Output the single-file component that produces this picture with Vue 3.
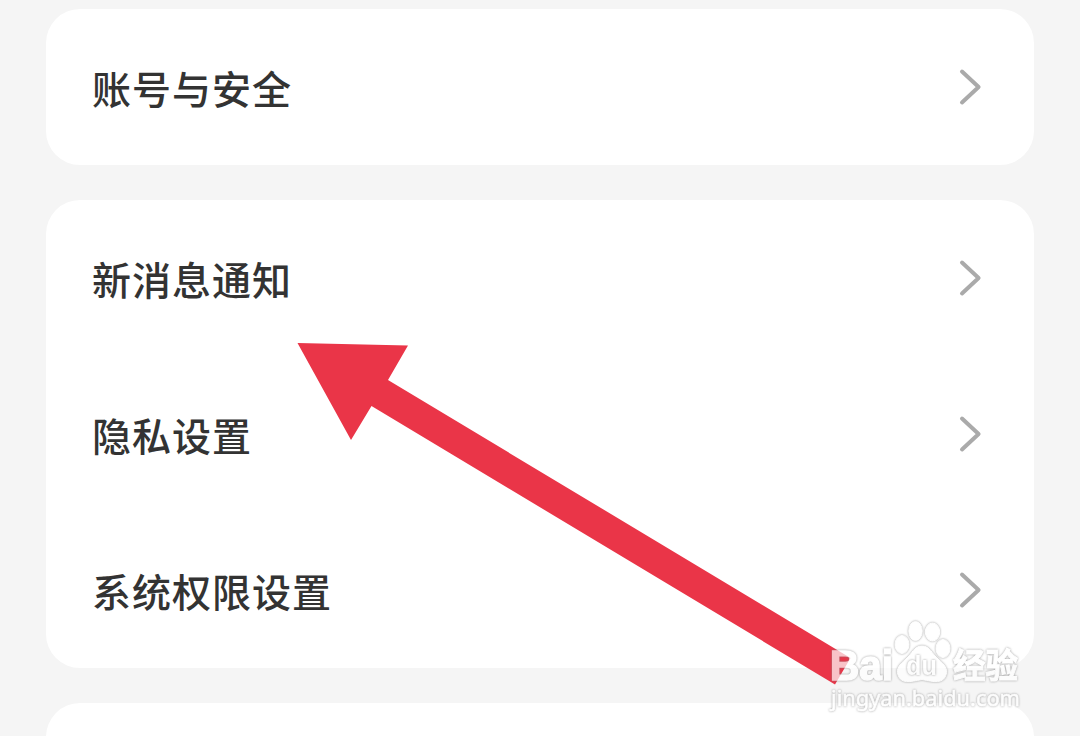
<template>
  <div class="settings">
    <section v-for="(group, i) in groups" :key="i" class="card">
      <div v-for="item in group" :key="item" class="row">
        <span class="label">{{ item }}</span>
        <svg class="chevron" viewBox="0 0 24 38" aria-hidden="true">
          <path d="M4 3.5 L20.6 19 L4 34.5" />
        </svg>
      </div>
    </section>

    <svg class="pointer" viewBox="0 0 1080 736" aria-hidden="true">
      <polygon points="297.5,343 408,345.5 388,380 850.5,658 835,684.5 371.5,406 351,440" />
    </svg>

    <svg class="watermark" viewBox="820 610 220 126">
      <g class="mark">
        <text class="brand" x="830" y="680" textLength="63" lengthAdjust="spacingAndGlyphs">Bai</text>
        <ellipse cx="902" cy="644.5" rx="7" ry="9" />
        <ellipse cx="915.5" cy="631" rx="6.7" ry="9.5" />
        <ellipse cx="932.5" cy="632" rx="7.2" ry="9" />
        <ellipse cx="943" cy="648.5" rx="7" ry="9" />
        <path d="M922 646 C930 646 932 654 938 659 C945 665 948 669 946 675 C943 684 934 682 922 679.5 C910 682 901 684 898 675 C896 669 899 665 906 659 C912 654 914 646 922 646 Z" />
        <text class="du" x="906" y="674.5" textLength="31" lengthAdjust="spacingAndGlyphs">du</text>
        <text class="cn" x="953" y="678" textLength="65" lengthAdjust="spacingAndGlyphs">经验</text>
        <text class="site" x="831" y="705.5" textLength="189" lengthAdjust="spacingAndGlyphs">jingyan.baidu.com</text>
      </g>
    </svg>
  </div>
</template>

<script setup>
const groups = [
  ['账号与安全'],
  ['新消息通知', '隐私设置', '系统权限设置'],
  ['']
]
</script>

<style>
body {
  margin: 0;
  overflow: hidden;
}
</style>

<style scoped>
.settings {
  position: relative;
  height: 736px;
  overflow: hidden;
  box-sizing: border-box;
  padding: 9px 46px 0;
  display: flex;
  flex-direction: column;
  gap: 35px;
  background: #f5f5f5;
  font-family: "Noto Sans CJK SC", sans-serif;
}

.card {
  flex-shrink: 0;
  background: #fff;
  border-radius: 34px;
}

.row {
  display: flex;
  align-items: center;
  justify-content: space-between;
  height: 156px;
  padding: 0 52px 0 46px;
  box-sizing: border-box;
}

.label {
  font-size: 39px;
  font-weight: 500;
  letter-spacing: 1px;
  line-height: 60px;
  color: #333;
}

.chevron {
  width: 24px;
  height: 38px;
  fill: none;
  stroke: #aaa;
  stroke-width: 4;
  stroke-linecap: round;
  stroke-linejoin: round;
}

.pointer {
  position: absolute;
  inset: 0;
  width: 1080px;
  height: 736px;
  fill: #ea3548;
}

/* translucent logo in the corner */
.watermark {
  position: absolute;
  left: 820px;
  top: 610px;
  width: 220px;
  height: 126px;
}
.mark {
  fill: #fff;
  stroke: #fff;
  stroke-width: 1;
  opacity: 0.7;
}
.mark > * {
  filter: drop-shadow(0 0 0.9px #777);
}
.brand,
.du {
  font-family: "Liberation Sans", sans-serif;
  font-weight: 700;
}
.brand {
  font-size: 42px;
  stroke-width: 1.6;
}
.du {
  font-size: 27px;
  stroke-width: 0;
}
.cn {
  font-size: 34px;
  font-weight: 700;
}
.site {
  font-family: "Noto Sans", sans-serif;
  font-size: 21px;
  stroke-width: 0.6;
}
</style>
